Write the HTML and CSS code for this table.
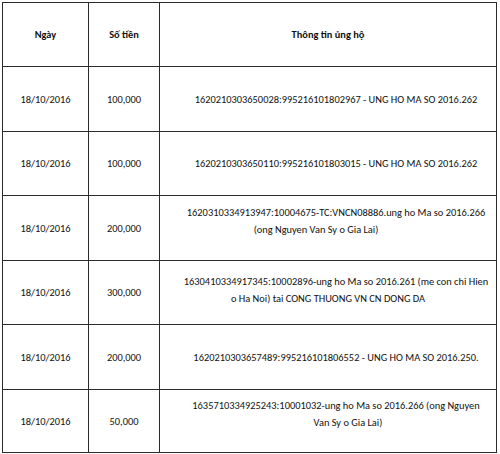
FILE: index.html
```html
<!DOCTYPE html>
<html lang="vi">
<head>
<meta charset="utf-8">
<link rel="stylesheet" href="styles.css">
</head>
<body>
<div class="table">
  <div class="cell head">Ngày</div>
  <div class="cell head">Số tiền</div>
  <div class="cell head">Thông tin ủng hộ</div>

  <div class="cell">18/10/2016</div>
  <div class="cell">100,000</div>
  <div class="cell info">1620210303650028:995216101802967 - UNG HO MA SO 2016.262</div>

  <div class="cell">18/10/2016</div>
  <div class="cell">100,000</div>
  <div class="cell info">1620210303650110:995216101803015 - UNG HO MA SO 2016.262</div>

  <div class="cell">18/10/2016</div>
  <div class="cell">200,000</div>
  <div class="cell info up-lg"><span class="line">1620310334913947:10004675-TC:VNCN08886.ung ho Ma so 2016.266</span><span class="line left-lg">(ong Nguyen Van Sy o Gia Lai)</span></div>

  <div class="cell">18/10/2016</div>
  <div class="cell">300,000</div>
  <div class="cell info up-sm"><span class="line">1630410334917345:10002896-ung ho Ma so 2016.261 (me con chi Hien</span><span class="line left-sm">o Ha Noi) tai CONG THUONG VN CN DONG DA</span></div>

  <div class="cell">18/10/2016</div>
  <div class="cell">200,000</div>
  <div class="cell info">1620210303657489:995216101806552 - UNG HO MA SO 2016.250.</div>

  <div class="cell">18/10/2016</div>
  <div class="cell">50,000</div>
  <div class="cell info up-lg"><span class="line">1635710334925243:10001032-ung ho Ma so 2016.266 (ong Nguyen</span><span class="line right-md">Van Sy o Gia Lai)</span></div>
</div>
</body>
</html>
```

FILE: styles.css
```css
html, body {
  margin: 0;
  padding: 0;
  background: #ffffff;
}

body {
  padding: 2px 0 0 2px;
  font-family: Carlito, Lato, "Open Sans", sans-serif;
  font-size: 10.4px;
  color: #111111;
}

.table {
  display: grid;
  width: 495px;
  box-sizing: border-box;
  grid-template-columns: 85px 70px 336px;
  grid-template-rows: 63px 64px 63px 64px 63px 64px 62px;
  gap: 1px;
  padding: 1px;
  background: #2b2b2b;
}

.cell {
  background: #ffffff;
  display: flex;
  flex-direction: column;
  align-items: center;
  justify-content: center;
  text-align: center;
  line-height: 17px;
  white-space: nowrap;
}

.head {
  font-weight: bold;
}

.info {
  padding-left: 16px;
}

.line {
  display: block;
}

.left-lg {
  padding-right: 40px;
}

.left-sm {
  padding-right: 16px;
}

.right-md {
  padding-left: 24px;
}

.up-lg {
  padding-bottom: 14px;
}

.up-sm {
  padding-bottom: 5px;
}
```
